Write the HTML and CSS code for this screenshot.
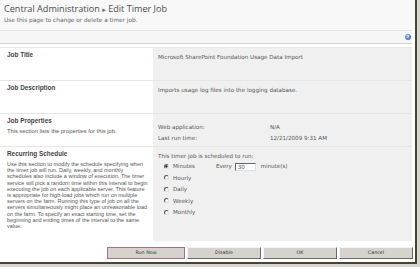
FILE: index.html
```html
<!DOCTYPE html>
<html lang="en">
<head>
    <meta charset="UTF-8">
    <title>Edit Timer Job</title>
    <link rel="stylesheet" href="styles.css">
</head>
<body>
    <div class="frame">
        <div class="header">
            <div class="title">Central Administration <span class="arrow">&#9656;</span> Edit Timer Job</div>
            <div class="subtitle">Use this page to change or delete a timer job.</div>
        </div>
        <div class="toolbar">
            <span class="help">?</span>
        </div>
        <div class="form">
            <div class="row row-short">
                <div class="left"><div class="label">Job Title</div></div>
                <div class="right"><div class="value">Microsoft SharePoint Foundation Usage Data Import</div></div>
            </div>
            <div class="row row-short">
                <div class="left"><div class="label">Job Description</div></div>
                <div class="right"><div class="value">Imports usage log files into the logging database.</div></div>
            </div>
            <div class="row row-short">
                <div class="left">
                    <div class="label">Job Properties</div>
                    <div class="desc">This section lists the properties for this job.</div>
                </div>
                <div class="right">
                    <div class="props">
                        <div class="prop"><span class="prop-name">Web application:</span><span>N/A</span></div>
                        <div class="prop"><span class="prop-name">Last run time:</span><span>12/21/2009 9:31 AM</span></div>
                    </div>
                </div>
            </div>
            <div class="row row-tall">
                <div class="left">
                    <div class="label">Recurring Schedule</div>
                    <div class="desc desc-long">Use this section to modify the schedule specifying when<br>
                        the timer job will run. Daily, weekly, and monthly<br>
                        schedules also include a window of execution. The timer<br>
                        service will pick a random time within this interval to begin<br>
                        executing the job on each applicable server. This feature<br>
                        is appropriate for high-load jobs which run on multiple<br>
                        servers on the farm. Running this type of job on all the<br>
                        servers simultaneously might place an unreasonable load<br>
                        on the farm. To specify an exact starting time, set the<br>
                        beginning and ending times of the interval to the same<br>
                        value.</div>
                </div>
                <div class="right">
                    <div class="sched-title">This timer job is scheduled to run:</div>
                    <div class="sched">
                        <div class="radios">
                            <div class="radio-row"><span class="radio checked"></span>Minutes</div>
                            <div class="radio-row"><span class="radio"></span>Hourly</div>
                            <div class="radio-row"><span class="radio"></span>Daily</div>
                            <div class="radio-row"><span class="radio"></span>Weekly</div>
                            <div class="radio-row"><span class="radio"></span>Monthly</div>
                        </div>
                        <div class="every">Every <span class="box">30</span> minute(s)</div>
                    </div>
                </div>
            </div>
        </div>
        <div class="buttons">
            <span class="btn btn-focus">Run Now</span>
            <span class="btn">Disable</span>
            <span class="btn">OK</span>
            <span class="btn">Cancel</span>
        </div>
    </div>
</body>
</html>
```

FILE: styles.css
```css
body {
    margin: 0;
    background-color: #d8d6d0;
    font-family: "DejaVu Sans", Verdana, sans-serif;
}
.frame {
    width: 415px;
    height: 262px;
    background-color: white;
    border-right: 2px solid #4a4434;
    border-bottom: 2px solid #4a4434;
    overflow: hidden;
}
.header {
    height: 30px;
    background-color: #f8f8f8;
    padding-left: 4px;
    box-sizing: border-box;
    padding-top: 3px;
}
.title {
    font-family: "Open Sans", sans-serif;
    font-size: 9.1px;
    color: #4c4c4c;
    line-height: 11px;
}
.arrow {
    font-family: "DejaVu Sans", sans-serif;
    font-size: 7px;
    color: #666;
    vertical-align: 0;
}
.subtitle {
    font-size: 5.8px;
    color: #666;
    margin-top: 1px;
}
.toolbar {
    height: 12px;
    margin-right: 3px;
    border-top: 1px solid #e4e4e4;
    border-bottom: 1px solid #d4d4d4;
    background-color: #f6f6f6;
    display: flex;
    justify-content: flex-end;
    align-items: center;
}
.help {
    width: 6px;
    height: 6px;
    border-radius: 50%;
    background: radial-gradient(circle at 35% 35%, #8db4e8, #2a5fb0);
    color: white;
    font-size: 4px;
    font-weight: bold;
    line-height: 6px;
    text-align: center;
    margin-right: 1px;
}
.form {
    margin-top: 3px;
    margin-right: 3px;
}
.row {
    display: flex;
    border-top: 1px solid #e6e6e6;
}
.row-short {
    height: 32px;
}
.row-tall {
    height: 94px;
}
.left {
    width: 153px;
    padding: 3px 0 0 7px;
    box-sizing: border-box;
}
.right {
    flex: 1;
    background-color: #f0f0f0;
    padding: 6px 0 0 5px;
    font-size: 5.6px;
    color: #555;
}
.label {
    font-family: "Liberation Sans", Arial, sans-serif;
    font-weight: bold;
    font-size: 6.4px;
    color: #444;
}
.desc {
    font-family: "Liberation Sans", Arial, sans-serif;
    font-size: 5.8px;
    color: #555;
    margin-top: 4px;
}
.desc-long {
    font-size: 5.5px;
    line-height: 6.2px;
    margin-top: 4px;
    white-space: nowrap;
}
.props {
    padding-top: 4px;
}
.prop {
    height: 11px;
}
.prop-name {
    display: inline-block;
    width: 112px;
}
.sched-title {
    margin-top: 0;
}
.sched {
    display: flex;
    margin-top: 4px;
}
.radios {
    padding-left: 6px;
    width: 52px;
}
.radio-row {
    height: 11.5px;
    display: flex;
    align-items: flex-start;
}
.radio {
    width: 3px;
    height: 3px;
    border: 1px solid;
    border-color: #555 #e0e0e0 #e0e0e0 #555;
    border-radius: 50%;
    background-color: white;
    margin-right: 4px;
    margin-top: 0.5px;
}
.radio.checked {
    background: radial-gradient(circle, #222 45%, white 55%);
}
.every {
    height: 8px;
}
.box {
    display: inline-block;
    width: 17px;
    height: 6px;
    line-height: 6px;
    border: 1px solid;
    border-color: #666 #ddd #ddd #666;
    background-color: white;
    padding-left: 2px;
    margin: 0 3px 0 1px;
    vertical-align: -1px;
}
.buttons {
    display: flex;
    justify-content: flex-end;
    gap: 2px;
    margin-top: 6px;
    margin-right: 2px;
}
.btn {
    width: 74px;
    height: 12px;
    box-sizing: border-box;
    background-color: #d6d3cc;
    border: 1px solid;
    border-color: #f4f4f4 #6a6a6a #6a6a6a #f4f4f4;
    font-size: 4.8px;
    color: #333;
    text-align: center;
    line-height: 10px;
}
.btn-focus {
    width: 78px;
    border-color: #a0708c;
}
```
